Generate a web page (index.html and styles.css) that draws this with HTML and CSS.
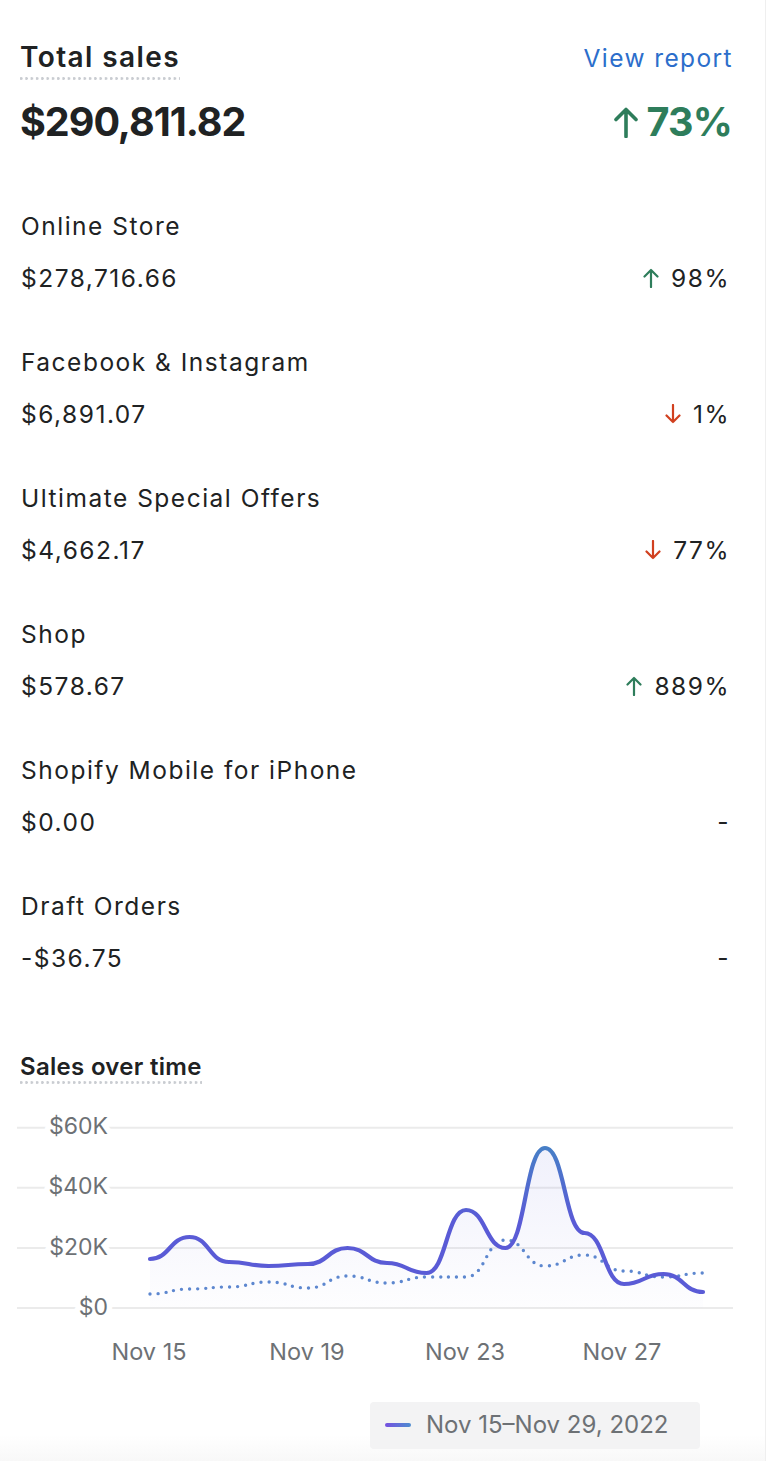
FILE: index.html
```html
<!DOCTYPE html>
<html lang="en">
<head>
<meta charset="utf-8">
<title>Total sales</title>
<link rel="stylesheet" href="styles.css">
</head>
<body>
<div class="card">
  <div class="head-row">
    <h2 class="title">Total sales</h2>
    <a class="link" href="#">View report</a>
  </div>
  <div class="total-row">
    <div class="total">$290,811.82</div>
    <div class="delta-big">
      <svg class="arrow-big" width="26" height="32" viewBox="0 0 26 32"><path d="M13 30.5V3.5M3 13.5L13 3.5 23 13.5" fill="none" stroke="#2e7d5b" stroke-width="3.6" stroke-linecap="round" stroke-linejoin="round"/></svg>
      <span>73%</span>
    </div>
  </div>

  <ul class="channels">
    <li class="channel">
      <div class="name">Online Store</div>
      <div class="values"><span>$278,716.66</span><span class="change"><svg class="arrow" width="16" height="20" viewBox="0 0 16 20"><path d="M8 19V2M1.5 8.5L8 2l6.5 6.5" fill="none" stroke="#2e7d5b" stroke-width="2.2" stroke-linecap="round" stroke-linejoin="round"/></svg>98%</span></div>
    </li>
    <li class="channel">
      <div class="name">Facebook &amp; Instagram</div>
      <div class="values"><span>$6,891.07</span><span class="change"><svg class="arrow" width="16" height="20" viewBox="0 0 16 20"><path d="M8 1v17M1.5 11.5L8 18l6.5-6.5" fill="none" stroke="#d1401f" stroke-width="2.2" stroke-linecap="round" stroke-linejoin="round"/></svg>1%</span></div>
    </li>
    <li class="channel">
      <div class="name">Ultimate Special Offers</div>
      <div class="values"><span>$4,662.17</span><span class="change"><svg class="arrow" width="16" height="20" viewBox="0 0 16 20"><path d="M8 1v17M1.5 11.5L8 18l6.5-6.5" fill="none" stroke="#d1401f" stroke-width="2.2" stroke-linecap="round" stroke-linejoin="round"/></svg>77%</span></div>
    </li>
    <li class="channel">
      <div class="name">Shop</div>
      <div class="values"><span>$578.67</span><span class="change"><svg class="arrow" width="16" height="20" viewBox="0 0 16 20"><path d="M8 19V2M1.5 8.5L8 2l6.5 6.5" fill="none" stroke="#2e7d5b" stroke-width="2.2" stroke-linecap="round" stroke-linejoin="round"/></svg>889%</span></div>
    </li>
    <li class="channel">
      <div class="name">Shopify Mobile for iPhone</div>
      <div class="values"><span>$0.00</span><span class="change">-</span></div>
    </li>
    <li class="channel">
      <div class="name">Draft Orders</div>
      <div class="values"><span>-$36.75</span><span class="change">-</span></div>
    </li>
  </ul>

  <h3 class="chart-title">Sales over time</h3>

  <svg class="chart" width="713" height="280" viewBox="0 0 713 280">
    <defs>
      <linearGradient id="lineGrad" gradientUnits="userSpaceOnUse" x1="0" y1="45" x2="0" y2="120">
        <stop offset="0" stop-color="#4680c6"/>
        <stop offset="1" stop-color="#5a5bd6"/>
      </linearGradient>
      <linearGradient id="fillGrad" gradientUnits="userSpaceOnUse" x1="0" y1="48" x2="0" y2="208">
        <stop offset="0" stop-color="#5b5fd6" stop-opacity="0.09"/>
        <stop offset="1" stop-color="#5b5fd6" stop-opacity="0.01"/>
      </linearGradient>
    </defs>
    <g class="grid">
      <line x1="-3" y1="27.7" x2="713" y2="27.7"/>
      <line x1="-3" y1="87.7" x2="713" y2="87.7"/>
      <line x1="-3" y1="148" x2="713" y2="148"/>
      <line x1="-3" y1="208" x2="713" y2="208"/>
    </g>
    <g class="ylabels">
      <text x="88" y="34.3">$60K</text>
      <text x="88" y="94.3">$40K</text>
      <text x="88" y="154.6">$20K</text>
      <text x="88" y="214.6">$0</text>
    </g>
    <path class="area" d="M130,159 C149.75,159 149.75,137 169.5,137 C189.25,137 189.25,162 209,162 C228.75,162 228.75,166 248.5,166 C268.25,166 268.25,164 288,164 C307.75,164 307.75,148 327.5,148 C347.25,148 347.25,163 367,163 C386.75,163 386.75,173 406.5,173 C426.25,173 426.25,110 446,110 C465.75,110 465.75,148 485.5,148 C505.25,148 505.25,48 525,48 C544.75,48 544.75,133 564.5,133 C584.25,133 584.25,184 604,184 C623.75,184 623.75,174 643.5,174 C663.25,174 663.25,192 683,192 L683,208 L130,208 Z"/>
    <path class="prev" d="M130,194 C149.75,194 149.75,189 169.5,189 C189.25,189 189.25,187 209,187 C228.75,187 228.75,182 248.5,182 C268.25,182 268.25,188 288,188 C307.75,188 307.75,176 327.5,176 C347.25,176 347.25,183 367,183 C386.75,183 386.75,177 406.5,177 C426.25,177 426.25,177 446,177 C465.75,177 465.75,140 485.5,140 C505.25,140 505.25,166 525,166 C544.75,166 544.75,155 564.5,155 C584.25,155 584.25,171 604,171 C623.75,171 623.75,177 643.5,177 C663.25,177 663.25,173 683,173"/>
    <path class="current" d="M130,159 C149.75,159 149.75,137 169.5,137 C189.25,137 189.25,162 209,162 C228.75,162 228.75,166 248.5,166 C268.25,166 268.25,164 288,164 C307.75,164 307.75,148 327.5,148 C347.25,148 347.25,163 367,163 C386.75,163 386.75,173 406.5,173 C426.25,173 426.25,110 446,110 C465.75,110 465.75,148 485.5,148 C505.25,148 505.25,48 525,48 C544.75,48 544.75,133 564.5,133 C584.25,133 584.25,184 604,184 C623.75,184 623.75,174 643.5,174 C663.25,174 663.25,192 683,192"/>
    <g class="xlabels">
      <text x="129" y="260">Nov 15</text>
      <text x="287" y="260">Nov 19</text>
      <text x="445" y="260">Nov 23</text>
      <text x="602" y="260">Nov 27</text>
    </g>
  </svg>

  <div class="legend">
    <span class="legend-line"></span>
    <span class="legend-text">Nov 15–Nov 29, 2022</span>
  </div>
</div>
</body>
</html>
```

FILE: styles.css
```css
* {
  box-sizing: border-box;
  margin: 0;
  padding: 0;
}

body {
  font-family: Inter, "Liberation Sans", sans-serif;
  color: #202223;
  background: #fff;
}

.card {
  width: 766px;
  min-height: 1461px;
  padding: 39px 33px 0 20px;
  border-right: 1px solid #efefef;
  background: linear-gradient(to bottom, #fff 0, #fff 1435px, #f8f8f8 1461px);
}

.head-row {
  display: flex;
  justify-content: space-between;
  align-items: baseline;
}

.title {
  font-size: 28px;
  font-weight: 600;
  letter-spacing: 1.4px;
  line-height: 36px;
  padding-bottom: 4.5px;
  background-image: radial-gradient(circle at 1.25px 1.25px, #c9ccd1 1.1px, transparent 1.4px);
  background-size: 5.3px 2.5px;
  background-repeat: repeat-x;
  background-position: 0 100%;
}

.link {
  font-size: 24.5px;
  letter-spacing: 1.4px;
  line-height: 36px;
  color: #2c6ecb;
  text-decoration: none;
  margin-right: -1px;
}

.total-row {
  display: flex;
  justify-content: space-between;
  align-items: center;
  margin-top: 18.5px;
}

.total {
  font-size: 39.5px;
  font-weight: 700;
  letter-spacing: -1px;
  line-height: 48px;
}

.delta-big {
  display: flex;
  align-items: center;
  gap: 7px;
  font-size: 39.5px;
  font-weight: 700;
  letter-spacing: -0.8px;
  line-height: 48px;
  color: #2e7d5b;
}

.channels {
  list-style: none;
  margin-top: 64px;
  padding-left: 1px;
  padding-right: 2px;
  display: flex;
  flex-direction: column;
  gap: 52px;
}

.name,
.values {
  font-size: 24.5px;
  letter-spacing: 1.5px;
  line-height: 32px;
}

.values {
  margin-top: 20px;
  display: flex;
  justify-content: space-between;
}

.change {
  display: flex;
  align-items: center;
}

.arrow {
  margin-right: 12px;
}

.chart-title {
  margin-top: 79px;
  display: inline-block;
  font-size: 24px;
  font-weight: 600;
  letter-spacing: 0.3px;
  line-height: 28px;
  padding-bottom: 2.5px;
  background-image: radial-gradient(circle at 1.25px 1.25px, #c9ccd1 1.1px, transparent 1.4px);
  background-size: 5.3px 2.5px;
  background-repeat: repeat-x;
  background-position: 0 100%;
}

.chart {
  display: block;
  margin-top: 16px;
  overflow: visible;
  font-family: Inter, "Liberation Sans", sans-serif;
}

.grid line {
  stroke: #ebebeb;
  stroke-width: 2;
}

.ylabels text {
  font-size: 23px;
  fill: #6d7175;
  text-anchor: end;
  paint-order: stroke;
  stroke: #fff;
  stroke-width: 11px;
  stroke-linejoin: round;
}

.xlabels text {
  font-size: 23.5px;
  fill: #6d7175;
  text-anchor: middle;
}

.area {
  fill: url(#fillGrad);
  stroke: none;
}

.prev {
  fill: none;
  stroke: #5d87cf;
  stroke-width: 3.4;
  stroke-dasharray: 0 8;
  stroke-linecap: round;
}

.current {
  fill: none;
  stroke: url(#lineGrad);
  stroke-width: 4.2;
  stroke-linecap: round;
  stroke-linejoin: round;
}

.legend {
  margin-top: 22px;
  margin-left: 350px;
  width: 330px;
  height: 47px;
  display: flex;
  align-items: center;
  gap: 15px;
  padding-left: 15px;
  background: #f3f3f4;
  border-radius: 4px;
}

.legend-line {
  width: 26px;
  height: 4px;
  border-radius: 2px;
  background: linear-gradient(to right, #7650e0, #4d8dd0);
}

.legend-text {
  font-size: 24px;
  line-height: 32px;
  color: #6d7175;
}
```
